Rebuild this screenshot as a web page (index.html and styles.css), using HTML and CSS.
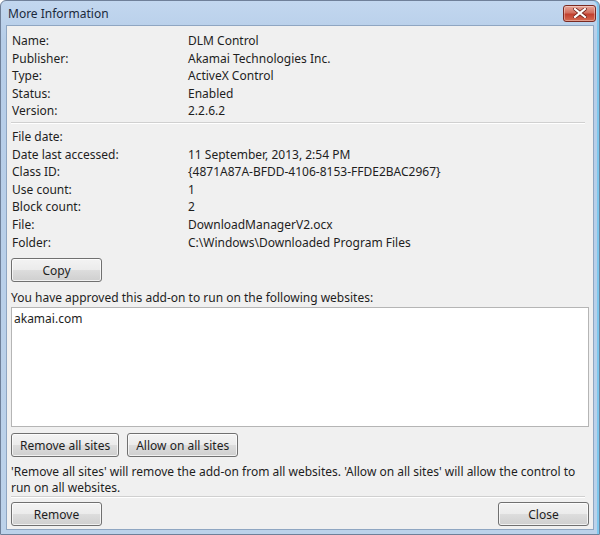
FILE: index.html
```html
<!DOCTYPE html>
<html lang="en">
<head>
    <meta charset="UTF-8">
    <title>More Information</title>
    <link rel="stylesheet" href="styles.css">
</head>
<body>
    <div class="window">
        <div class="titlebar">
            <span class="title">More Information</span>
            <button class="close-btn" aria-label="Close">
                <svg width="14" height="10" viewBox="0 0 14 10">
                    <path d="M2 1 L12 9 M12 1 L2 9" stroke="#6b1f18" stroke-width="3.6" stroke-linecap="square"/>
                    <path d="M2 1 L12 9 M12 1 L2 9" stroke="#fff" stroke-width="2.2" stroke-linecap="square"/>
                </svg>
            </button>
        </div>
        <div class="client">
            <dl class="props">
                <dt>Name:</dt><dd>DLM Control</dd>
                <dt>Publisher:</dt><dd>Akamai Technologies Inc.</dd>
                <dt>Type:</dt><dd>ActiveX Control</dd>
                <dt>Status:</dt><dd>Enabled</dd>
                <dt>Version:</dt><dd>2.2.6.2</dd>
            </dl>
            <hr class="sep">
            <dl class="props">
                <dt>File date:</dt><dd></dd>
                <dt>Date last accessed:</dt><dd>11 September, 2013, 2:54 PM</dd>
                <dt>Class ID:</dt><dd>{4871A87A-BFDD-4106-8153-FFDE2BAC2967}</dd>
                <dt>Use count:</dt><dd>1</dd>
                <dt>Block count:</dt><dd>2</dd>
                <dt>File:</dt><dd>DownloadManagerV2.ocx</dd>
                <dt>Folder:</dt><dd>C:\Windows\Downloaded Program Files</dd>
            </dl>
            <div class="row copy-row">
                <button class="btn">Copy</button>
            </div>
            <p class="label">You have approved this add-on to run on the following websites:</p>
            <div class="sites">
                <div class="site">akamai.com</div>
            </div>
            <div class="row site-btns">
                <button class="btn wide">Remove all sites</button>
                <button class="btn wide">Allow on all sites</button>
            </div>
            <p class="note">'Remove all sites' will remove the add-on from all websites. 'Allow on all sites' will allow the control to run on all websites.</p>
            <hr class="sep">
            <div class="row footer">
                <button class="btn">Remove</button>
                <button class="btn">Close</button>
            </div>
        </div>
    </div>
</body>
</html>
```

FILE: styles.css
```css
* {
    margin: 0;
    padding: 0;
    box-sizing: border-box;
}

body {
    width: 600px;
    height: 535px;
    overflow: hidden;
    font-family: "Noto Sans", "Open Sans", sans-serif;
    font-size: 12px;
    color: #1e1e1e;
    background: #fff;
}

.window {
    width: 600px;
    height: 535px;
    background: linear-gradient(#c2d7ef, #b6cde8 40px, #bcd2ea);
    border: 1px solid #6f8099;
    border-top-left-radius: 6px;
    border-top-right-radius: 6px;
    display: flex;
    flex-direction: column;
    padding: 0 5px 4px 5px;
    box-shadow: inset -2px 0 0 #7ec8ee;
}

.titlebar {
    height: 24px;
    display: flex;
    align-items: center;
    justify-content: space-between;
    padding-left: 2px;
}

.title {
    font-size: 12px;
    color: #1b2a3c;
}

.close-btn {
    width: 33px;
    height: 17px;
    margin-top: 0;
    margin-right: -2px;
    border: 1px solid #7a2a22;
    border-radius: 3px;
    background: linear-gradient(#e7a598, #d26f5f 45%, #c2402f 55%, #d56a52);
    display: flex;
    align-items: center;
    justify-content: center;
    box-shadow: inset 0 0 0 1px rgba(255, 255, 255, 0.35);
}

.client {
    flex: 1;
    background: #f0f0f0;
    border: 1px solid #8fa6c2;
    padding: 6px 3px 0 4px;
    display: flex;
    flex-direction: column;
}

.props {
    display: grid;
    grid-template-columns: 176px 1fr;
    line-height: 17.6px;
    padding-left: 1px;
}

.props dd {
    min-height: 17.6px;
}

.sep {
    border: 0;
    border-top: 1px solid #d0d0d0;
    border-bottom: 1px solid #fff;
    margin: 2px 5px 4px 0;
}

.btn {
    font-family: inherit;
    font-size: 12px;
    color: #1e1e1e;
    width: 91px;
    height: 24px;
    border: 1px solid #707070;
    border-radius: 3px;
    background: linear-gradient(#f3f3f3, #ebebeb 50%, #dddddd 50%, #cfcfcf);
    box-shadow: inset 0 0 0 1px rgba(255, 255, 255, 0.7);
}

.btn.wide {
    width: auto;
    padding: 0 8px;
}

.row {
    display: flex;
    gap: 8px;
}

.copy-row {
    margin-top: 7px;
}

.label {
    margin-top: 7px;
    line-height: 17px;
}

.sites {
    height: 120px;
    background: #fff;
    border: 1px solid #b5b5b5;
    margin: 1px 1px 0 0;
    padding: 3px 2px;
}

.site {
    line-height: 16px;
}

.site-btns {
    margin-top: 6px;
}

.note {
    margin-top: 7px;
    line-height: 16px;
    margin-bottom: -2px;
}

.footer {
    justify-content: space-between;
    padding-right: 1px;
}
```
